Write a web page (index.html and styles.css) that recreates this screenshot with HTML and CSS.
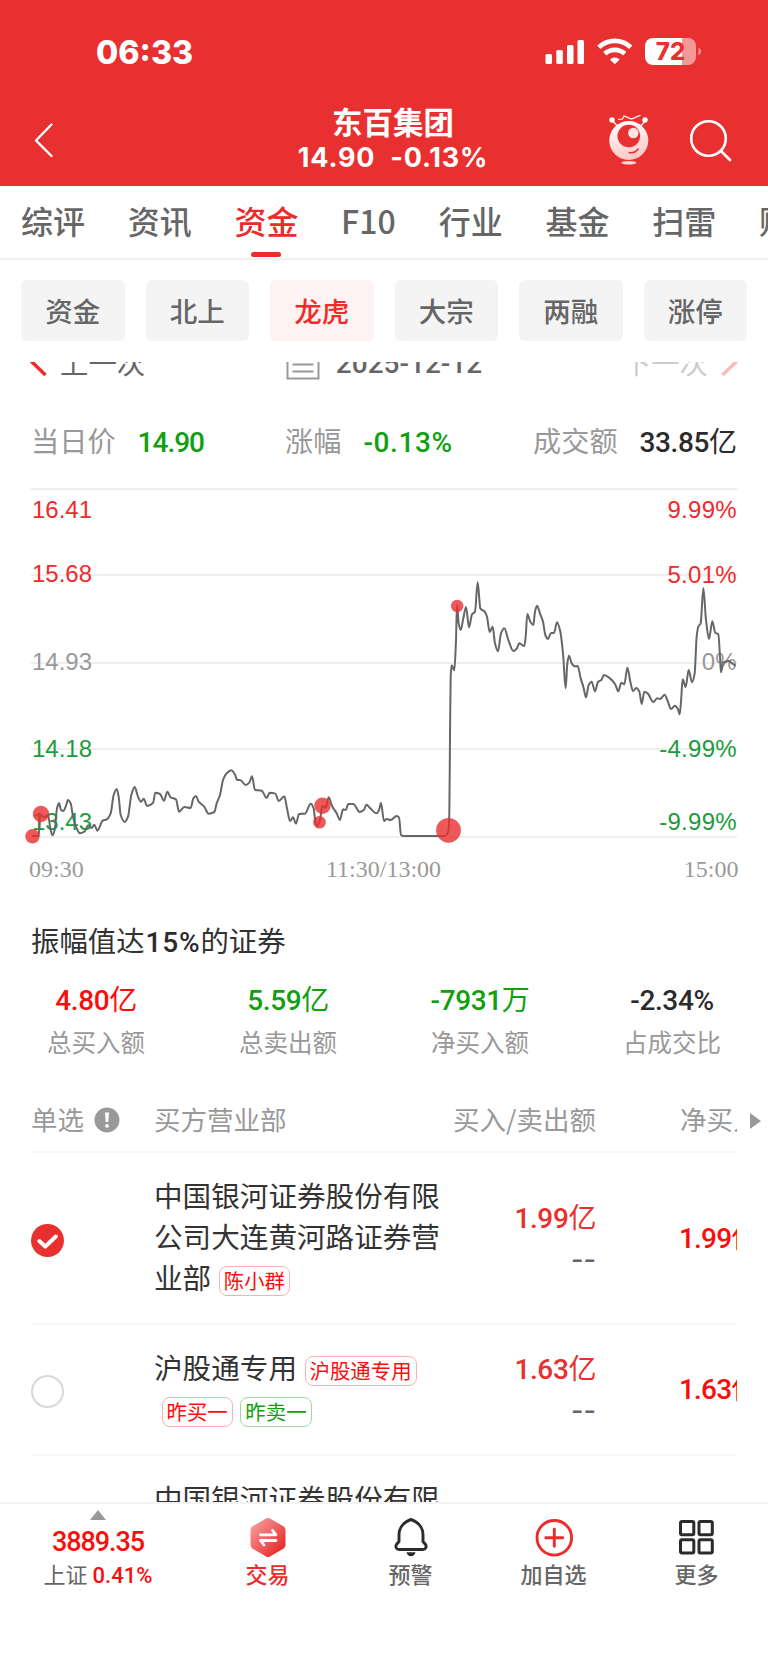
FILE: index.html
```html
<!DOCTYPE html>
<html lang="zh-CN">
<head>
    <meta charset="UTF-8">
    <meta name="viewport" content="width=device-width, initial-scale=1.0">
    <title>东百集团</title>
    <link rel="stylesheet" href="styles.css">
</head>
<body>
    <!-- Header -->
    <header class="header">
        <div class="status-bar">
            <span class="time">06:33</span>
            <svg class="status-icons" width="160" height="30" viewBox="0 0 160 30">
                <g fill="#fff">
                    <rect x="0.5" y="17" width="6.5" height="10" rx="1.5"/>
                    <rect x="11.3" y="13" width="6.5" height="14" rx="1.5"/>
                    <rect x="22" y="8" width="6.5" height="19" rx="1.5"/>
                    <rect x="32.5" y="3" width="6.5" height="24" rx="1.5"/>
                    <path d="M69.800 27.300l-4.800-4.800a7 7 0 0 1 9.600 0z"/>
                </g>
                <g fill="none" stroke="#fff" stroke-width="4.700">
                    <path d="M53.800 10.200a23.500 23.500 0 0 1 32 0"/>
                    <path d="M59.800 16.800a14.800 14.800 0 0 1 20 0"/>
                </g>
                <path d="M108 1h29v27h-29a8 8 0 0 1-8-8V9a8 8 0 0 1 8-8z" fill="#fff"/>
                <path d="M137 1h6a8 8 0 0 1 8 8v11a8 8 0 0 1-8 8h-6z" fill="#fff" fill-opacity="0.5"/>
                <path d="M153.500 10.500q5 4 0 8z" fill="#fff" fill-opacity="0.5"/>
                <text class="battery-text" x="125.500" y="23">72</text>
            </svg>
        </div>
        <div class="nav-bar">
            <svg class="back" width="20" height="36" viewBox="0 0 20 36" fill="none" stroke="#fff" stroke-width="2.400" stroke-linecap="round" stroke-linejoin="round">
                <path d="M17.500 2.500L2 18.500l15.500 15.500"/>
            </svg>
            <div class="stock">
                <div class="stock-name">东百集团</div>
                <div class="stock-price"><span>14.90</span><span>-0.13%</span></div>
            </div>
            <svg class="robot" width="42" height="50" viewBox="0 0 42 50">
                <defs>
                    <linearGradient id="robotFill" x1="0.300" y1="0" x2="0.600" y2="1">
                        <stop offset="0" stop-color="#fff"/>
                        <stop offset="1" stop-color="#ffc4c4"/>
                    </linearGradient>
                </defs>
                <g fill="none" stroke="#fff" stroke-width="1.200">
                    <path d="M10 4.500l4.500-0.500 1.500-3 7.500 3 9-3.800"/>
                    <path d="M5 6l5 6M37 6l-5 6"/>
                </g>
                <circle cx="4" cy="5" r="2.700" fill="#fff"/>
                <circle cx="37" cy="5" r="2.700" fill="#fff"/>
                <circle cx="20.800" cy="25.500" r="19.500" fill="url(#robotFill)"/>
                <circle cx="20.800" cy="21" r="11.300" fill="#e93030"/>
                <circle cx="25.300" cy="18" r="5.200" fill="#ffe4e4"/>
                <path d="M20.500 37.500q6.500 1.500 10-4" fill="none" stroke="#e93030" stroke-width="1.400"/>
                <ellipse cx="20.800" cy="47.700" rx="7.500" ry="1.800" fill="#ffd6d6"/>
            </svg>
            <svg class="search" width="44" height="44" viewBox="0 0 44 44" fill="none" stroke="#fff" stroke-width="2.600" stroke-linecap="round">
                <circle cx="19.500" cy="20.500" r="17.300"/>
                <path d="M32 33l9 9"/>
            </svg>
        </div>
    </header>

    <!-- Main tabs -->
    <nav class="tabs">
        <a class="tab">综评</a>
        <a class="tab">资讯</a>
        <a class="tab active">资金</a>
        <a class="tab tab-f10">F10</a>
        <a class="tab">行业</a>
        <a class="tab">基金</a>
        <a class="tab">扫雷</a>
        <a class="tab">财务</a>
    </nav>

    <!-- Sub tabs -->
    <div class="chips">
        <a class="chip">资金</a>
        <a class="chip">北上</a>
        <a class="chip active">龙虎</a>
        <a class="chip">大宗</a>
        <a class="chip">两融</a>
        <a class="chip">涨停</a>
    </div>

    <!-- Scrolling content -->
    <main class="content">
        <div class="date-row">
            <a class="prev">
                <svg width="18" height="28" viewBox="0 0 18 28" fill="none" stroke="#ee2b2b" stroke-width="3.500"><path d="M15.500 1.500L2.500 14.500l13 12.500"/></svg>
                上一次
            </a>
            <div class="date">
                <svg width="34" height="36" viewBox="0 0 34 36" fill="none" stroke="#999" stroke-width="2">
                    <path d="M1.500 3.500h31v31h-31zM6.500 12h21M6.500 20.500h21M6.500 27.500h21"/>
                </svg>
                <span>2025-12-12</span>
            </div>
            <a class="next">
                下一次
                <svg width="18" height="28" viewBox="0 0 18 28" fill="none" stroke="#ffb9b9" stroke-width="3.500"><path d="M2.500 1.500l13 13-13 12.500"/></svg>
            </a>
        </div>

        <div class="quote">
            <div class="quote-price"><span class="label">当日价</span><span class="num green">14.90</span></div>
            <div class="quote-change"><span class="label">涨幅</span><span class="num green">-0.13%</span></div>
            <div><span class="label">成交额</span><span class="num">33.85<i>亿</i></span></div>
        </div>

        <svg class="chart" width="768" height="410" viewBox="0 0 768 410">
            <path class="grid" d="M31 9H737M31 95H737M31 183H737M31 269H737M31 357H737"/>
            <g class="axis">
                <text class="up" x="32" y="38">16.41</text>
                <text class="up" x="32" y="101.500">15.68</text>
                <text x="32" y="189.500">14.93</text>
                <text class="down" x="32" y="277">14.18</text>
                <text class="down" x="32" y="350">13.43</text>
            </g>
            <g class="axis axis-right">
                <text class="up" x="737" y="38">9.99%</text>
                <text class="up" x="737" y="103">5.01%</text>
                <text x="737" y="190">0%</text>
                <text class="down" x="737" y="277">-4.99%</text>
                <text class="down" x="737" y="350">-9.99%</text>
            </g>
            <path id="priceLine" class="price-line"/>
            <g class="dots">
                <circle cx="32.500" cy="356.300" r="7.200"/>
                <circle cx="41" cy="334" r="8.200"/>
                <circle cx="319.500" cy="342.300" r="6.300"/>
                <circle cx="322.500" cy="325.700" r="8.200"/>
                <circle cx="448.500" cy="350.300" r="12.400"/>
                <circle cx="457.200" cy="126" r="6.200"/>
            </g>
            <g class="times">
                <text x="29" y="397">09:30</text>
                <text x="383.500" y="397" text-anchor="middle">11:30/13:00</text>
                <text x="738.500" y="397" text-anchor="end">15:00</text>
            </g>
        </svg>

        <h2 class="reason">振幅值达<span class="num">15%</span>的证券</h2>

        <div class="summary">
            <div><div class="num red">4.80<i>亿</i></div><div class="label">总买入额</div></div>
            <div><div class="num green">5.59<i>亿</i></div><div class="label">总卖出额</div></div>
            <div><div class="num green">-7931<i>万</i></div><div class="label">净买入额</div></div>
            <div><div class="num">-2.34%</div><div class="label">占成交比</div></div>
        </div>

        <!-- Broker table -->
        <div class="table">
            <div class="row head">
                <div class="col-pick">
                    单选
                    <svg width="26" height="26" viewBox="0 0 26 26">
                        <circle cx="13" cy="13" r="12.500" fill="#999"/>
                        <path d="M11 5.500h4l-0.700 9.500h-2.600z" fill="#fff"/>
                        <circle cx="13" cy="18.800" r="1.900" fill="#fff"/>
                    </svg>
                </div>
                <div class="col-name">买方营业部</div>
                <div class="col-amount">买入/卖出额</div>
                <div class="col-net">净买入额</div>
            </div>
            <div class="row">
                <div class="col-pick">
                    <svg class="radio" width="33" height="33" viewBox="0 0 33 33">
                        <circle cx="16.500" cy="16.500" r="16.500" fill="#e93030"/>
                        <path d="M8.300 17l6 5.500 10.500-10" fill="none" stroke="#fff" stroke-width="4" stroke-linecap="round" stroke-linejoin="round"/>
                    </svg>
                </div>
                <div class="col-name">中国银河证券股份有限公司大连黄河路证券营业部<span class="tag">陈小群</span></div>
                <div class="col-amount"><div class="num">1.99<i>亿</i></div><div class="none">--</div></div>
                <div class="col-net num">1.99<i>亿</i></div>
            </div>
            <div class="row">
                <div class="col-pick"><span class="radio radio-off"></span></div>
                <div class="col-name">沪股通专用<span class="tag">沪股通专用</span><br><span class="tag">昨买一</span><span class="tag tag-green">昨卖一</span></div>
                <div class="col-amount"><div class="num">1.63<i>亿</i></div><div class="none">--</div></div>
                <div class="col-net num">1.63<i>亿</i></div>
            </div>
            <div class="row">
                <div class="col-pick"></div>
                <div class="col-name">中国银河证券股份有限</div>
            </div>
        </div>
        <span class="more-arrow"></span>
    </main>

    <!-- Bottom bar -->
    <footer class="bottom-bar">
        <div class="index">
            <span class="triangle"></span>
            <div class="index-value">3889.35</div>
            <div class="index-change">上证 <b>0.41%</b></div>
        </div>
        <a class="action trade">
            <svg width="40" height="42" viewBox="0 0 40 42">
                <defs>
                    <linearGradient id="tradeFill" x1="0.100" y1="0.100" x2="0.900" y2="0.900">
                        <stop offset="0" stop-color="#f79a9a"/>
                        <stop offset="1" stop-color="#e82525"/>
                    </linearGradient>
                </defs>
                <path d="M18.500 1.300q1.500-0.800 3 0l13.800 7.900q2.200 1.300 2.200 3.800v15q0 2.500-2.200 3.800l-13.800 7.900q-1.500 0.800-3 0L4.700 31.800Q2.500 30.500 2.500 28V13q0-2.500 2.200-3.800z" fill="url(#tradeFill)"/>
                <g fill="none" stroke="#fff" stroke-width="2.800" stroke-linecap="round" stroke-linejoin="round">
                    <path d="M12.500 17.800h15.500l-3.500-4.500"/>
                    <path d="M28 23.500H12.500l3.500 4.500"/>
                </g>
            </svg>
            交易
        </a>
        <a class="action">
            <svg width="40" height="42" viewBox="0 0 40 42" fill="none" stroke="#2b2b2b" stroke-width="2.900" stroke-linejoin="round">
                <path d="M20 2.500C12.500 5 8 11 8 18v6.500l-2.300 2.700c-1.700 2.300-0.600 5.300 2.500 5.300h23.600c3.100 0 4.200-3 2.500-5.300L32 24.500V18C32 11 27.500 5 20 2.500z"/>
                <path d="M15.500 35.300h9c-1 5.400-8 5.400-9 0z" fill="#2b2b2b" stroke="none"/>
            </svg>
            预警
        </a>
        <a class="action">
            <svg width="40" height="42" viewBox="0 0 40 42" fill="none" stroke="#ee2b2b" stroke-width="2.900" stroke-linecap="round">
                <circle cx="20.300" cy="20.800" r="17.300"/>
                <path d="M11.800 20.800h17M20.300 12.300v17"/>
            </svg>
            加自选
        </a>
        <a class="action">
            <svg width="40" height="42" viewBox="0 0 40 42" fill="none" stroke="#2b2b2b" stroke-width="3">
                <rect x="3.500" y="4.500" width="13.300" height="13.300" rx="1.500"/>
                <rect x="22" y="4.500" width="13.300" height="13.300" rx="1.500"/>
                <rect x="3.500" y="22.700" width="13.300" height="13.300" rx="1.500"/>
                <rect x="22" y="22.700" width="13.300" height="13.300" rx="1.500"/>
            </svg>
            更多
        </a>
    </footer>

    <script src="chart.js"></script>
</body>
</html>
```
FILE: styles.css
```css
/* General Styles */
* {
    box-sizing: border-box;
}
body {
    margin: 0;
    width: 768px;
    height: 1663px;
    overflow: hidden;
    background: #fff;
    color: #333;
    font-family: "Noto Sans CJK SC", sans-serif;
}
svg {
    display: block;
    flex: none;
}
.num {
    font-family: Roboto, "Noto Sans CJK SC", sans-serif;
    font-weight: 500;
    font-size: 28px;
    letter-spacing: -0.4px;
    color: #2b2b2b;
}
.num i {
    font-style: normal;
    font-weight: 400;
}
.label {
    color: #999;
}
.num.red {
    color: #fb0d0d;
}
.num.green {
    color: #10a010;
}

/* Header */
.header {
    height: 186px;
    background: #e93030;
    color: #fff;
}
.status-bar {
    height: 94px;
    padding: 37px 63px 0 96px;
    display: flex;
    justify-content: space-between;
}
.time {
    font: 800 32.2px/32px Inter, sans-serif;
}
.battery-text {
    font: 800 24px Inter, sans-serif;
    fill: #e93030;
    text-anchor: middle;
}
.nav-bar {
    height: 92px;
    padding: 0 35px 0 34px;
    display: flex;
    align-items: center;
}
.stock {
    margin-left: 244px;
    width: 190px;
    text-align: center;
}
.stock-name {
    font-size: 30.5px;
    line-height: 36px;
    font-weight: bold;
}
.stock-price {
    display: flex;
    justify-content: center;
    gap: 15px;
    font: bold 27px/38px Inter, sans-serif;
    letter-spacing: 0.8px;
    white-space: nowrap;
}
.robot {
    margin-left: 120px;
}
.search {
    margin-left: 39px;
}

/* Main tabs */
.tabs {
    display: flex;
    gap: 42.7px;
    height: 74px;
    padding-left: 21px;
    border-bottom: 2px solid #f0f0f0;
    overflow: hidden;
}
.tab {
    position: relative;
    flex: none;
    height: 72px;
    font-size: 32px;
    line-height: 69px;
    font-weight: 500;
    color: #666;
}
.tab-f10 {
    width: 55px;
}
.tab.active {
    color: #ee2b2b;
}
.tab.active::after {
    content: "";
    position: absolute;
    left: 17px;
    bottom: 1px;
    width: 30px;
    height: 5px;
    border-radius: 3px;
    background: #ee2b2b;
}

/* Sub tabs */
.chips {
    display: flex;
    justify-content: space-between;
    height: 102px;
    padding: 20px 21px;
}
.chip {
    width: 103.5px;
    height: 61px;
    border-radius: 6px;
    background: #f4f4f4;
    color: #666;
    font-size: 27.5px;
    line-height: 60px;
    font-weight: 500;
    text-align: center;
}
.chip.active {
    background: #fef2f2;
    color: #ee2b2b;
}

/* Scrolling content */
.content {
    position: relative;
    height: 1140px;
    overflow: hidden;
}
.date-row {
    display: flex;
    justify-content: space-between;
    align-items: center;
    height: 40px;
    margin-top: -20px;
    padding: 0 30px;
    font-size: 28.4px;
    line-height: 40px;
    color: #666;
}
.date-row a,
.date {
    display: flex;
    align-items: center;
    gap: 12px;
}
.date {
    gap: 16px;
    font-family: Roboto, sans-serif;
    font-size: 28px;
    font-weight: 500;
}
.date span {
    padding-top: 3px;
}
.date-row .next {
    color: #ccc;
}
.quote {
    display: flex;
    height: 98px;
    padding: 38px 0 0 31px;
    font-size: 28.2px;
    line-height: 40px;
    white-space: nowrap;
}
.quote-price {
    width: 254px;
}
.quote-change {
    width: 248px;
}
.quote .num {
    margin-left: 22px;
}
.quote-price .num {
    letter-spacing: -1px;
}
.quote-change .num {
    letter-spacing: 0.6px;
}

/* Chart */
.grid {
    stroke: #eee;
    stroke-width: 2;
}
.axis text {
    font: 24px "Liberation Sans", sans-serif;
    fill: #999;
}
.axis-right text {
    text-anchor: end;
    letter-spacing: 0.3px;
}
.axis .up {
    fill: #f02a2a;
}
.axis .down {
    fill: #1c9c3c;
}
.price-line {
    fill: none;
    stroke: #666;
    stroke-width: 2;
    stroke-linejoin: round;
}
.dots {
    fill: #e93030;
    fill-opacity: 0.8;
}
.times text {
    font: 24px "Liberation Serif", serif;
    fill: #999;
}

/* Summary */
.reason {
    height: 92px;
    margin: 0;
    padding: 9px 31px 0;
    font-size: 28.4px;
    line-height: 82px;
    font-weight: 400;
    white-space: nowrap;
}
.reason .num {
    margin-left: 1px;
    letter-spacing: 0.8px;
}
.summary {
    display: flex;
    text-align: center;
}
.summary > div {
    width: 192px;
}
.summary .num {
    padding-top: 1px;
    line-height: 36px;
}
.summary .label {
    margin-top: 6px;
    font-size: 24.5px;
    line-height: 34px;
}

/* Broker table */
.table {
    width: 706px;
    margin-left: 31px;
    overflow: hidden;
}
.row {
    display: flex;
    align-items: center;
    width: 780px;
    padding: 21px 0 26px;
    border-bottom: 2px solid #f8f8f8;
    line-height: 41px;
}
.head {
    height: 94px;
    padding: 27px 0 0;
    font-size: 26.5px;
    color: #999;
}
.head svg {
    margin-top: 3px;
}
.col-pick {
    display: flex;
    align-items: center;
    gap: 10px;
    width: 123px;
}
.col-name {
    width: 290px;
    font-size: 28.6px;
}
.head .col-name {
    font-size: 26.5px;
}
.col-amount {
    width: 152px;
    text-align: right;
}
.row:not(.head) .col-amount {
    margin: 3px 0 -3px;
}
.col-amount .num {
    color: #e93030;
}
.none {
    font: 500 27px/41px Inter, sans-serif;
    color: #666;
}
.col-net {
    margin-left: 84px;
    white-space: nowrap;
}
.col-net.num {
    margin-top: 5px;
    margin-left: 83px;
    letter-spacing: -0.8px;
    color: #fb0d0d;
}
.radio {
    margin-top: 9px;
}
.radio-off {
    width: 33px;
    height: 33px;
    border: 2px solid #d8d8d8;
    border-radius: 50%;
}
.tag {
    display: inline-block;
    height: 30px;
    margin-left: 7.6px;
    padding: 0 4px;
    border: 1px solid #fdb0b0;
    border-radius: 8px;
    color: #fb0d0d;
    font-size: 20.4px;
    line-height: 26px;
    vertical-align: 0;
}
.tag-green {
    border-color: #a0d8a0;
    color: #10a010;
}
.more-arrow {
    position: absolute;
    left: 750px;
    top: 751px;
    border-left: 11px solid #999;
    border-top: 8px solid transparent;
    border-bottom: 8px solid transparent;
}

/* Bottom bar */
.bottom-bar {
    display: flex;
    height: 161px;
    border-top: 2px solid #f3f3f3;
    background: #fff;
    font-size: 22px;
    line-height: 30px;
    color: #666;
}
.index {
    display: flex;
    flex-direction: column;
    align-items: center;
    width: 196px;
    padding-top: 6px;
}
.triangle {
    border-bottom: 10px solid #999;
    border-left: 8.5px solid transparent;
    border-right: 8.5px solid transparent;
}
.index-value {
    margin-top: 5px;
    font: 500 27px/34px Roboto, sans-serif;
    letter-spacing: -1.1px;
    color: #fb0d0d;
}
.index-change {
    margin-top: -1px;
    white-space: nowrap;
}
.index-change b {
    font-family: Roboto, sans-serif;
    font-weight: 500;
    color: #fb0d0d;
}
.action {
    display: flex;
    flex-direction: column;
    align-items: center;
    width: 143px;
    padding-top: 13px;
    font-weight: 500;
}
.action svg {
    margin-bottom: -1px;
}
.trade {
    color: #ee2b2b;
}
```
FILE: chart.js
```javascript
// intraday price, [x, y] in thirds of a pixel
const prices = [
    [96, 1068], [116, 1067], [121, 1004], [133, 1012], [144, 1006], [152, 1050], [158, 1066], [165, 1045], [171, 985], [177, 969],
    [183, 990], [190, 993], [197, 980], [204, 960], [212, 970], [220, 1015], [230, 1045], [240, 1060], [253, 1055], [265, 1036],
    [275, 1044], [283, 1034], [292, 1052], [308, 1022], [320, 1018], [332, 1000], [341, 945], [350, 927], [356, 950], [362, 1005],
    [374, 1026], [384, 1010], [394, 945], [404, 921], [414, 950], [423, 965], [431, 956], [441, 978], [459, 969], [466, 938],
    [480, 942], [492, 962], [502, 935], [512, 952], [528, 958], [537, 995], [553, 981], [572, 984], [580, 955], [588, 948],
    [596, 965], [612, 979], [626, 1001], [643, 996], [650, 970], [660, 945], [669, 900], [680, 880], [694, 871], [704, 882],
    [712, 900], [720, 900], [737, 915], [748, 908], [756, 889], [765, 930], [785, 932], [800, 954], [809, 938], [826, 941],
    [836, 963], [853, 949], [861, 985], [870, 1023], [879, 1012], [888, 1031], [897, 1002], [915, 1001], [932, 971], [941, 985],
    [946, 1025], [952, 1037], [960, 1020], [967, 978], [977, 983], [986, 952], [996, 978], [1010, 1000], [1020, 1020], [1029, 988],
    [1037, 990], [1045, 972], [1060, 972], [1079, 996], [1092, 989], [1099, 974], [1110, 984], [1130, 1000], [1137, 990], [1143, 969],
    [1152, 1023], [1160, 1017], [1172, 1020], [1190, 1008], [1197, 1012], [1203, 1065], [1210, 1068], [1334, 1068], [1345, 1055], [1348, 1000],
    [1350, 770], [1352, 590], [1355, 556], [1363, 571], [1368, 480], [1371, 375], [1376, 430], [1382, 450], [1390, 415], [1398, 381],
    [1407, 442], [1416, 403], [1425, 395], [1433, 307], [1441, 385], [1455, 396], [1461, 410], [1469, 456], [1478, 440], [1485, 490],
    [1494, 514], [1503, 460], [1513, 445], [1525, 480], [1540, 513], [1550, 506], [1558, 490], [1573, 498], [1577, 470], [1582, 402],
    [1591, 425], [1600, 435], [1605, 395], [1611, 377], [1620, 400], [1629, 425], [1636, 465], [1644, 477], [1653, 459], [1662, 459],
    [1671, 427], [1681, 455], [1689, 520], [1697, 625], [1702, 550], [1707, 527], [1715, 550], [1724, 559], [1733, 558], [1742, 595],
    [1750, 620], [1758, 652], [1766, 615], [1775, 605], [1785, 634], [1794, 606], [1804, 600], [1812, 585], [1830, 595], [1845, 612],
    [1855, 634], [1864, 608], [1873, 613], [1882, 563], [1891, 605], [1899, 633], [1909, 624], [1918, 635], [1925, 672], [1933, 635],
    [1943, 640], [1960, 666], [1972, 655], [1980, 657], [1994, 644], [2003, 663], [2013, 687], [2025, 677], [2034, 688], [2039, 703],
    [2043, 665], [2048, 598], [2057, 621], [2066, 570], [2076, 607], [2084, 580], [2090, 470], [2095, 440], [2102, 430], [2110, 325],
    [2118, 420], [2127, 477], [2137, 424], [2146, 459], [2155, 462], [2160, 530], [2163, 577], [2169, 548], [2185, 543], [2207, 556]
];

// keep the curve flat at every local high and low
function slopeAt(points, i) {
    if (i === 0 || i === points.length - 1) return 0;
    const [x0, y0] = points[i - 1];
    const [x1, y1] = points[i];
    const [x2, y2] = points[i + 1];
    const left = (y1 - y0) / (x1 - x0);
    const right = (y2 - y1) / (x2 - x1);
    if (left * right <= 0) return 0;
    return 2 * left * right / (left + right);
}

function smoothPath(points) {
    let d = `M${points[0][0]} ${points[0][1]}`;
    for (let i = 1; i < points.length; i++) {
        const [x0, y0] = points[i - 1];
        const [x1, y1] = points[i];
        const step = (x1 - x0) / 3;
        const c0 = y0 + slopeAt(points, i - 1) * step;
        const c1 = y1 - slopeAt(points, i) * step;
        d += `C${x0 + step} ${c0} ${x1 - step} ${c1} ${x1} ${y1}`;
    }
    return d;
}

const scaled = prices.map(([x, y]) => [x / 3, y / 3]);
document.getElementById("priceLine").setAttribute("d", smoothPath(scaled));
```
